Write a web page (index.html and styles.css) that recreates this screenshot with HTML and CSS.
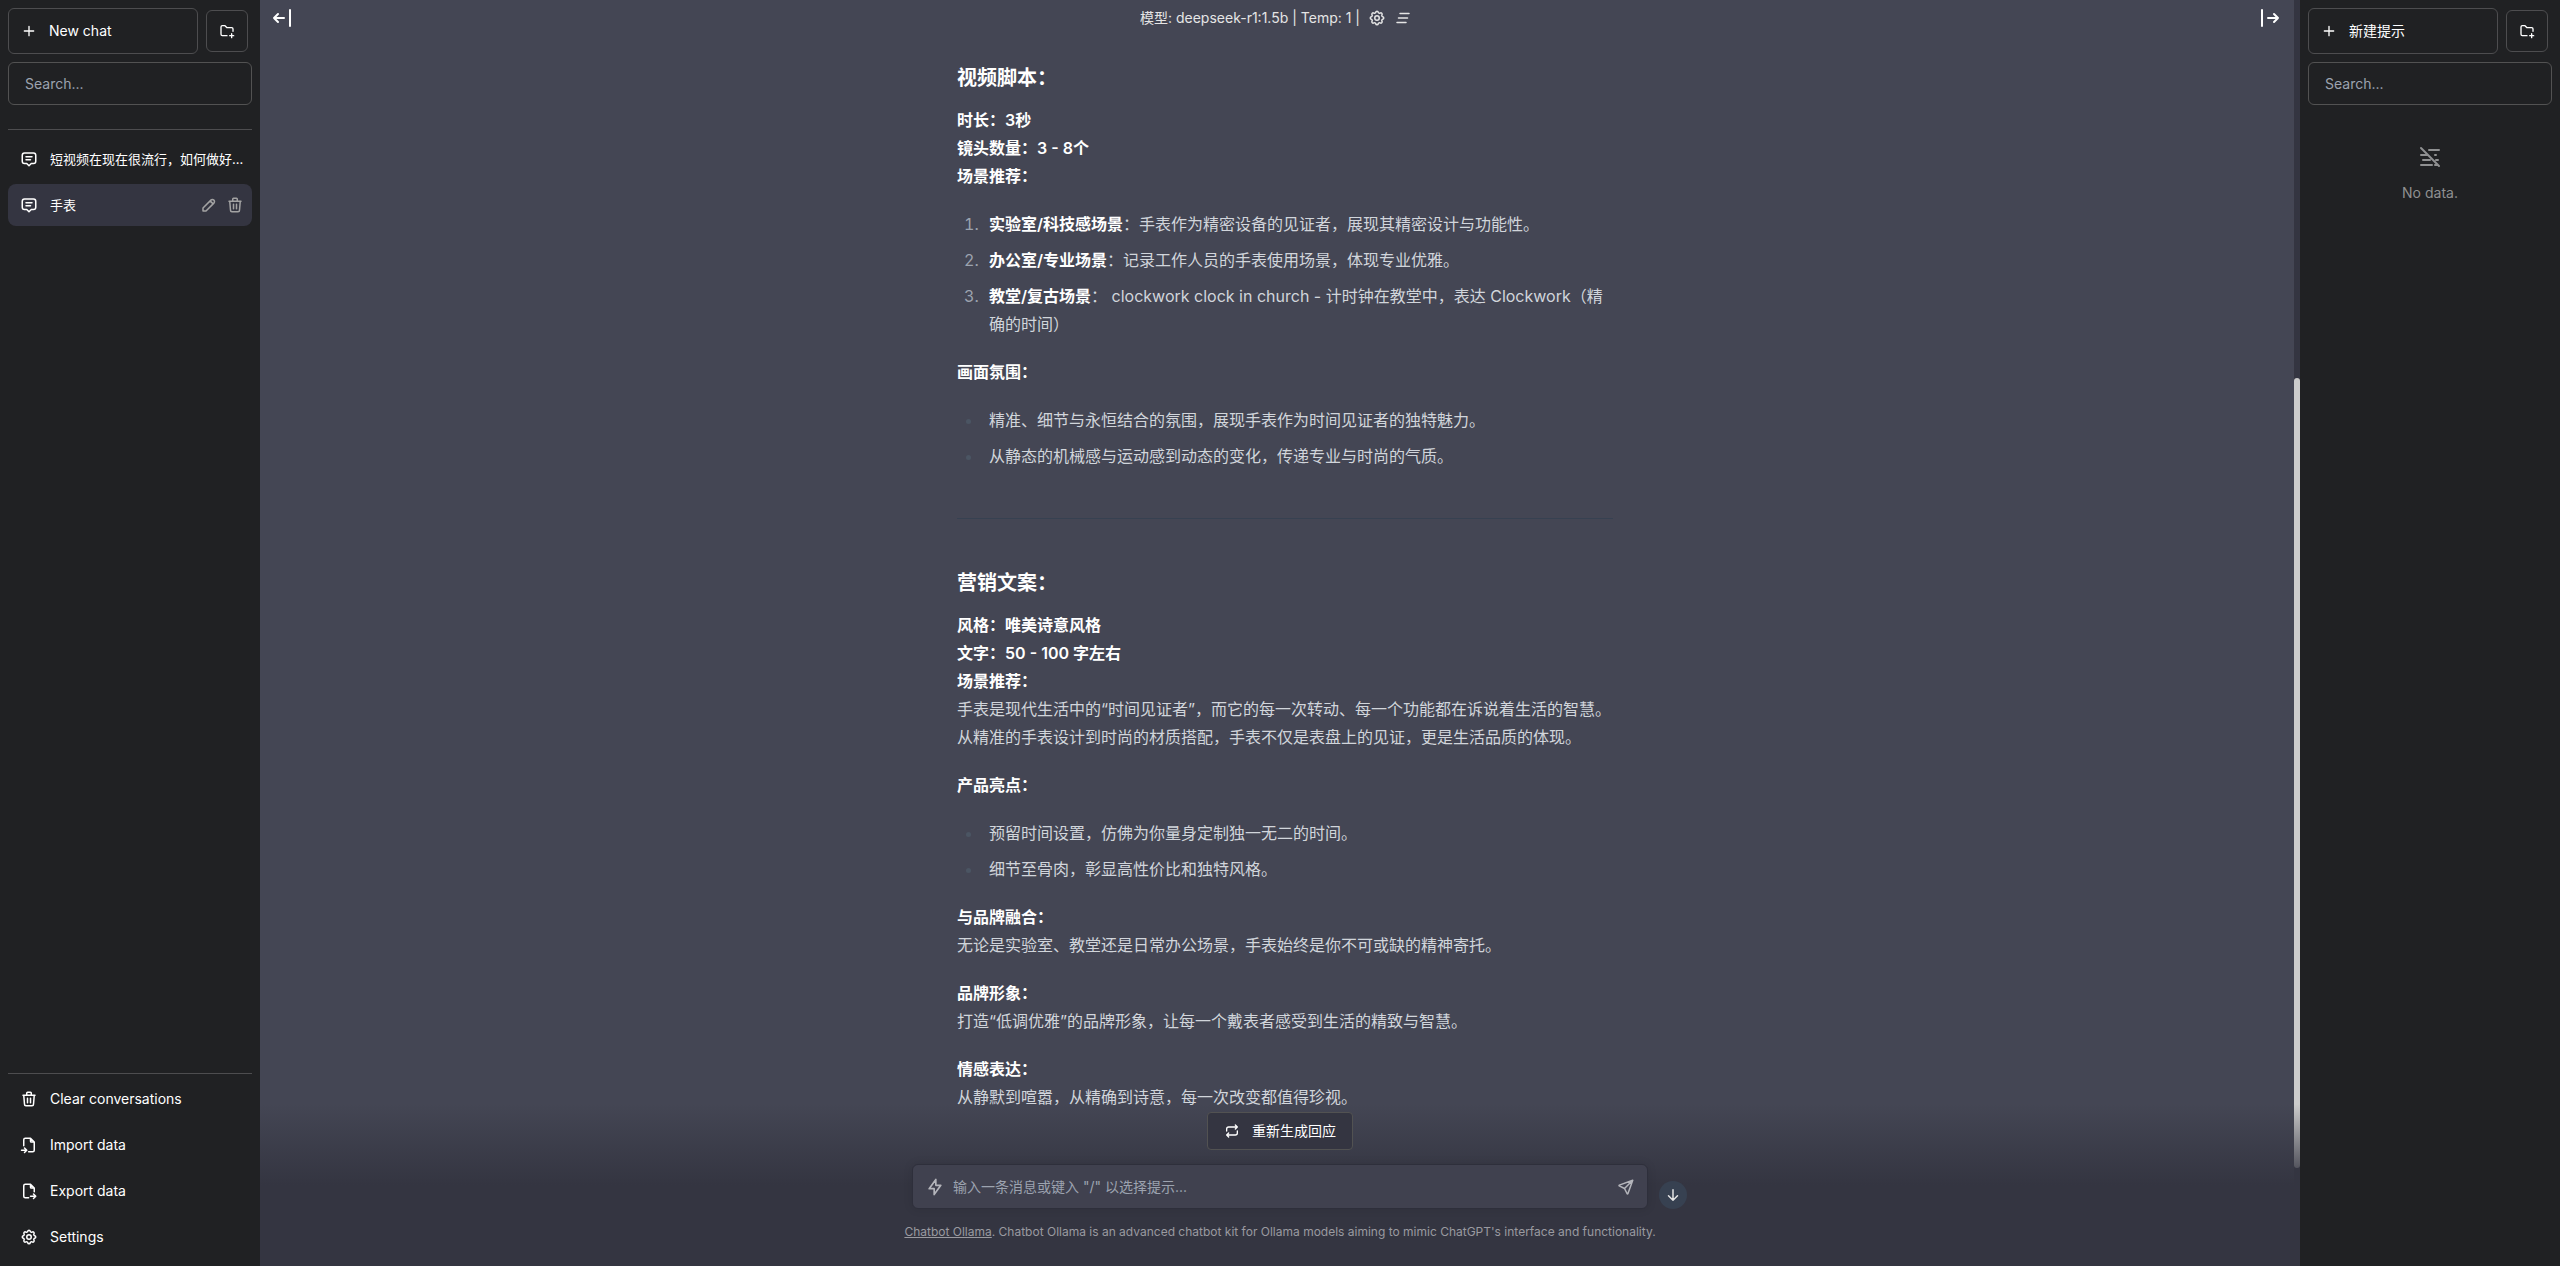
FILE: index.html
```html
<!DOCTYPE html>
<html lang="zh">
<head>
  <meta charset="UTF-8">
  <meta name="viewport" content="width=device-width, initial-scale=1.0">
  <title>Chatbot Ollama</title>
  <link rel="stylesheet" href="styles.css">
</head>
<body>
  <!-- Icons -->
  <svg class="sprite" aria-hidden="true">
    <symbol id="plus" viewBox="0 0 24 24"><path d="M12 5v14M5 12h14"/></symbol>
    <symbol id="folder-plus" viewBox="0 0 24 24"><path d="M12 19H5a2 2 0 0 1-2-2V6a2 2 0 0 1 2-2h4l3 3h7a2 2 0 0 1 2 2v3.500M16 19h6M19 16v6"/></symbol>
    <symbol id="message" viewBox="0 0 24 24"><path d="M8 9h8M8 13h6M9 18H6a3 3 0 0 1-3-3V7a3 3 0 0 1 3-3h12a3 3 0 0 1 3 3v8a3 3 0 0 1-3 3h-3l-3 3-3-3z"/></symbol>
    <symbol id="pencil" viewBox="0 0 24 24"><path d="M4 20h4L18.500 9.500a2.828 2.828 0 1 0-4-4L4 16v4M13.500 6.500l4 4"/></symbol>
    <symbol id="trash" viewBox="0 0 24 24"><path d="M4 7h16M10 11v6M14 11v6M5 7l1 12a2 2 0 0 0 2 2h8a2 2 0 0 0 2-2l1-12M9 7V4a1 1 0 0 1 1-1h4a1 1 0 0 1 1 1v3"/></symbol>
    <symbol id="file-import" viewBox="0 0 24 24"><path d="M14 3v4a1 1 0 0 0 1 1h4M5 13V5a2 2 0 0 1 2-2h7l5 5v11a2 2 0 0 1-2 2h-5.500M2 19h7M6 16l3 3-3 3"/></symbol>
    <symbol id="file-export" viewBox="0 0 24 24"><path d="M14 3v4a1 1 0 0 0 1 1h4M11.500 21H7a2 2 0 0 1-2-2V5a2 2 0 0 1 2-2h7l5 5v5M14 19h7M18 16l3 3-3 3"/></symbol>
    <symbol id="settings" viewBox="0 0 24 24"><path d="M10.325 4.317c.426-1.756 2.924-1.756 3.350 0a1.724 1.724 0 0 0 2.573 1.066c1.543-.940 3.310.826 2.370 2.370a1.724 1.724 0 0 0 1.065 2.572c1.756.426 1.756 2.924 0 3.350a1.724 1.724 0 0 0-1.066 2.573c.940 1.543-.826 3.310-2.370 2.370a1.724 1.724 0 0 0-2.572 1.065c-.426 1.756-2.924 1.756-3.350 0a1.724 1.724 0 0 0-2.573-1.066c-1.543.940-3.310-.826-2.370-2.370a1.724 1.724 0 0 0-1.065-2.572c-1.756-.426-1.756-2.924 0-3.350a1.724 1.724 0 0 0 1.066-2.573c-.940-1.543.826-3.310 2.370-2.370 1 .608 2.296.070 2.572-1.065z"/><circle cx="12" cy="12" r="3"/></symbol>
    <symbol id="clear-all" viewBox="0 0 24 24"><path d="M8 6h12M6 12h12M4 18h12"/></symbol>
    <symbol id="bar-left" viewBox="0 0 24 24"><path d="M4 12h10M4 12l4 4M4 12l4-4M20 4v16"/></symbol>
    <symbol id="bar-right" viewBox="0 0 24 24"><path d="M20 12H10M20 12l-4 4M20 12l-4-4M4 4v16"/></symbol>
    <symbol id="repeat" viewBox="0 0 24 24"><path d="M4 12V9a3 3 0 0 1 3-3h13M17 3l3 3-3 3M20 12v3a3 3 0 0 1-3 3H4M7 21l-3-3 3-3"/></symbol>
    <symbol id="bolt" viewBox="0 0 24 24"><path d="M13 3v7h6l-8 11v-7H5z"/></symbol>
    <symbol id="send" viewBox="0 0 24 24"><path d="M10 14L21 3M21 3l-6.500 18a.55.55 0 0 1-1 0L10 14l-7-3.500a.55.55 0 0 1 0-1z"/></symbol>
    <symbol id="arrow-down" viewBox="0 0 24 24"><path d="M12 5v14M18 13l-6 6M6 13l6 6"/></symbol>
    <symbol id="list-off" viewBox="0 0 24 24"><path d="M3 3l18 18M11 5h10M3 10h6M17 10h1M5 15h7M18 15h2M3 20h11M17 20h3"/></symbol>
  </svg>

  <div class="app">
    <!-- Conversations -->
    <aside class="sidebar">
      <div class="sidebar-head">
        <button class="new-button"><svg class="icon-sm"><use href="#plus"/></svg>New chat</button>
        <button class="folder-button" aria-label="New folder"><svg class="icon-sm"><use href="#folder-plus"/></svg></button>
      </div>
      <input class="search" type="text" placeholder="Search..." aria-label="Search conversations">
      <div class="conversations">
        <button class="conversation">
          <svg class="icon"><use href="#message"/></svg>
          <span class="conversation-name">短视频在现在很流行，如何做好...</span>
        </button>
        <div class="conversation-row">
          <button class="conversation">
            <svg class="icon"><use href="#message"/></svg>
            <span class="conversation-name">手表</span>
          </button>
          <button class="row-action" aria-label="Rename"><svg class="icon"><use href="#pencil"/></svg></button>
          <button class="row-action" aria-label="Delete"><svg class="icon"><use href="#trash"/></svg></button>
        </div>
      </div>
      <div class="sidebar-foot">
        <button class="foot-button"><svg class="icon"><use href="#trash"/></svg>Clear conversations</button>
        <button class="foot-button"><svg class="icon"><use href="#file-import"/></svg>Import data</button>
        <button class="foot-button"><svg class="icon"><use href="#file-export"/></svg>Export data</button>
        <button class="foot-button"><svg class="icon"><use href="#settings"/></svg>Settings</button>
      </div>
    </aside>

    <!-- Chat -->
    <main class="chat">
      <div class="chat-scroll">
        <header class="topbar">
          <button class="toggle" aria-label="Hide conversations"><svg class="icon-lg"><use href="#bar-left"/></svg></button>
          <div class="model">
            <span>模型: deepseek-r1:1.5b | Temp: 1 |</span>
            <button class="model-button" aria-label="Model settings"><svg class="icon"><use href="#settings"/></svg></button>
            <button class="model-button" aria-label="Clear chat"><svg class="icon"><use href="#clear-all"/></svg></button>
          </div>
          <button class="toggle" aria-label="Hide prompts"><svg class="icon-lg"><use href="#bar-right"/></svg></button>
        </header>

        <article class="message">
          <div class="prose">
            <h3>视频脚本：</h3>
            <p><strong>时长：3秒</strong><br><strong>镜头数量：3 - 8个</strong><br><strong>场景推荐：</strong></p>
            <ol>
              <li><strong>实验室/科技感场景</strong>：手表作为精密设备的见证者，展现其精密设计与功能性。</li>
              <li><strong>办公室/专业场景</strong>：记录工作人员的手表使用场景，体现专业优雅。</li>
              <li><strong>教堂/复古场景</strong>： clockwork clock in church - 计时钟在教堂中，表达 Clockwork（精确的时间）</li>
            </ol>
            <p><strong>画面氛围：</strong></p>
            <ul>
              <li>精准、细节与永恒结合的氛围，展现手表作为时间见证者的独特魅力。</li>
              <li>从静态的机械感与运动感到动态的变化，传递专业与时尚的气质。</li>
            </ul>
            <hr>
            <h3>营销文案：</h3>
            <p><strong>风格：唯美诗意风格</strong><br><strong>文字：50 - 100 字左右</strong><br><strong>场景推荐：</strong><br>手表是现代生活中的“时间见证者”，而它的每一次转动、每一个功能都在诉说着生活的智慧。<br>从精准的手表设计到时尚的材质搭配，手表不仅是表盘上的见证，更是生活品质的体现。</p>
            <p><strong>产品亮点：</strong></p>
            <ul>
              <li>预留时间设置，仿佛为你量身定制独一无二的时间。</li>
              <li>细节至骨肉，彰显高性价比和独特风格。</li>
            </ul>
            <p><strong>与品牌融合：</strong><br>无论是实验室、教堂还是日常办公场景，手表始终是你不可或缺的精神寄托。</p>
            <p><strong>品牌形象：</strong><br>打造“低调优雅”的品牌形象，让每一个戴表者感受到生活的精致与智慧。</p>
            <p><strong>情感表达：</strong><br>从静默到喧嚣，从精确到诗意，每一次改变都值得珍视。</p>
          </div>
        </article>
      </div>
      <div class="scrollbar"><div class="scrollbar-thumb"></div></div>

      <!-- Message box over the end of the chat -->
      <div class="composer">
        <button class="regenerate"><svg class="icon-sm"><use href="#repeat"/></svg>重新生成回应</button>
        <div class="composer-row">
          <div class="composer-box">
            <button class="composer-button" aria-label="Prompts"><svg class="icon-md"><use href="#bolt"/></svg></button>
            <textarea class="composer-input" rows="1" placeholder='输入一条消息或键入 "/" 以选择提示...' aria-label="Message"></textarea>
            <button class="composer-button" aria-label="Send"><svg class="icon"><use href="#send"/></svg></button>
          </div>
          <button class="scroll-down" aria-label="Scroll down"><svg class="icon"><use href="#arrow-down"/></svg></button>
        </div>
        <p class="note"><a href="#">Chatbot Ollama</a>. Chatbot Ollama is an advanced chatbot kit for Ollama models aiming to mimic ChatGPT's interface and functionality.</p>
      </div>
    </main>

    <!-- Prompts -->
    <aside class="sidebar">
      <div class="sidebar-head">
        <button class="new-button"><svg class="icon-sm"><use href="#plus"/></svg>新建提示</button>
        <button class="folder-button" aria-label="New folder"><svg class="icon-sm"><use href="#folder-plus"/></svg></button>
      </div>
      <input class="search" type="text" placeholder="Search..." aria-label="Search prompts">
      <div class="empty">
        <svg class="icon-lg"><use href="#list-off"/></svg>
        <span>No data.</span>
      </div>
    </aside>
  </div>
</body>
</html>
```
FILE: styles.css
```css
* {
  box-sizing: border-box;
}
body {
  margin: 0;
  font-family: Inter, "Noto Sans CJK SC", sans-serif;
  font-size: 14px;
  line-height: 20px;
  color: #fff;
  background: #343541;
}
button,
input,
textarea {
  font: inherit;
  color: inherit;
  background: none;
  border: none;
  margin: 0;
  padding: 0;
}
button {
  cursor: pointer;
}
svg {
  display: block;
  flex-shrink: 0;
  fill: none;
  stroke: currentColor;
  stroke-width: 2;
  stroke-linecap: round;
  stroke-linejoin: round;
}
.sprite {
  display: none;
}
.icon-sm {
  width: 16px;
  height: 16px;
}
.icon {
  width: 18px;
  height: 18px;
}
.icon-md {
  width: 20px;
  height: 20px;
}
.icon-lg {
  width: 24px;
  height: 24px;
}
.app {
  display: flex;
  height: 100vh;
}

/* Sidebars */
.sidebar {
  display: flex;
  flex-direction: column;
  gap: 8px;
  width: 260px;
  flex-shrink: 0;
  padding: 8px;
  background: #202123;
}
.sidebar-head {
  display: flex;
  align-items: center;
  gap: 8px;
}
.new-button {
  display: flex;
  align-items: center;
  gap: 12px;
  width: 190px;
  padding: 12px;
  border: 1px solid #4d4d4f;
  border-radius: 6px;
}
.folder-button {
  padding: 12px;
  border: 1px solid #4d4d4f;
  border-radius: 6px;
}
.search {
  width: 100%;
  height: 43px;
  padding: 0 16px;
  border: 1px solid #525252;
  border-radius: 6px;
}
.search::placeholder {
  color: #9ca3af;
  opacity: 1;
}
.conversations {
  display: flex;
  flex-direction: column;
  gap: 4px;
  flex: 1;
  margin-top: 16px;
  padding-top: 8px;
  border-top: 1px solid #4d4d4f;
}
.conversation {
  display: flex;
  align-items: center;
  gap: 12px;
  flex: 0 0 auto;
  width: 100%;
  height: 42px;
  padding: 0 12px;
  text-align: left;
}
.conversation-name {
  font-size: 13px;
  line-height: 16px;
  white-space: nowrap;
}
.conversation-row {
  display: flex;
  align-items: center;
  gap: 8px;
  padding-right: 8px;
  border-radius: 8px;
  background: #343541;
}
.conversation-row .conversation {
  flex: 1;
}
.row-action {
  color: #a3a3a3;
}
.sidebar-foot {
  display: flex;
  flex-direction: column;
  gap: 4px;
  padding-top: 4px;
  border-top: 1px solid #4d4d4f;
}
.foot-button {
  display: flex;
  align-items: center;
  gap: 12px;
  height: 42px;
  padding: 0 12px;
}
.empty {
  display: flex;
  flex-direction: column;
  align-items: center;
  gap: 14px;
  margin-top: 32px;
  color: #8f9091;
}

/* Chat */
.chat {
  position: relative;
  display: flex;
  flex: 1;
  min-width: 0;
  background: #444654;
}
.chat-scroll {
  flex: 1;
  min-width: 0;
  overflow: hidden;
}
.topbar {
  display: flex;
  align-items: center;
  justify-content: space-between;
  height: 36px;
  padding: 0 12px 0 10px;
}
.model {
  display: flex;
  align-items: center;
  gap: 8px;
  color: #e5e5e5;
}
.message {
  max-width: 768px;
  margin: 0 auto;
  padding: 26px 0 32px 64px;
}
.scrollbar {
  width: 6px;
  padding-top: 378px;
  background: #343541;
}
.scrollbar-thumb {
  height: 790px;
  border-radius: 6px;
  background: #ccc;
}

/* Markdown */
.prose {
  max-width: 656px;
  font-size: 16px;
  line-height: 28px;
  color: #d1d5db;
}
.prose h3 {
  margin: 0 0 12px;
  font-size: 20px;
  line-height: 32px;
  font-weight: 600;
  color: #fff;
}
.prose strong {
  font-weight: 600;
  color: #fff;
}
.prose p {
  margin: 20px 0;
}
.prose h3 + p {
  margin-top: 0;
}
.prose ol,
.prose ul {
  margin: 20px 0;
  padding-left: 26px;
}
.prose li {
  padding-left: 6px;
}
.prose li + li {
  margin-top: 8px;
}
.prose ol li::marker {
  color: #9ca3af;
}
.prose ul li::marker {
  color: #4b5563;
}
.prose hr {
  height: 0;
  margin: 48px 0;
  border: 0;
  border-top: 1px solid #374151;
}

/* Composer */
.composer {
  position: absolute;
  left: 0;
  right: 0;
  bottom: 0;
  display: flex;
  flex-direction: column;
  align-items: center;
  padding-top: 8px;
  background: linear-gradient(to bottom, transparent, #343541 50%, #343541);
}
.regenerate {
  display: flex;
  align-items: center;
  gap: 12px;
  padding: 8px 16px;
  border: 1px solid #525252;
  border-radius: 4px;
  background: #343541;
}
.composer-row {
  display: grid;
  grid-template-columns: 1fr minmax(0, 736px) 1fr;
  align-items: end;
  gap: 11px;
  width: 100%;
  margin-top: 14px;
}
.composer-box {
  grid-column: 2;
  display: flex;
  align-items: center;
  gap: 8px;
  height: 45px;
  padding: 0 12px;
  border: 1px solid #2e2f3b;
  border-radius: 6px;
  background: #40414f;
  box-shadow: 0 0 10px rgba(0, 0, 0, 0.1);
}
.composer-button {
  color: #b4b5bb;
}
.composer-input {
  flex: 1;
  height: 24px;
  font-size: 14px;
  line-height: 24px;
  resize: none;
  overflow: hidden;
}
.composer-input::placeholder {
  color: #9ca3af;
  opacity: 1;
}
.scroll-down {
  display: flex;
  align-items: center;
  justify-content: center;
  width: 28px;
  height: 28px;
  border-radius: 50%;
  color: #e5e5e5;
  background: #374151;
}
.note {
  margin: 0;
  padding: 13px 16px 24px;
  font-size: 12px;
  line-height: 20px;
  color: #9a9aa0;
}
.note a {
  color: inherit;
}
```
